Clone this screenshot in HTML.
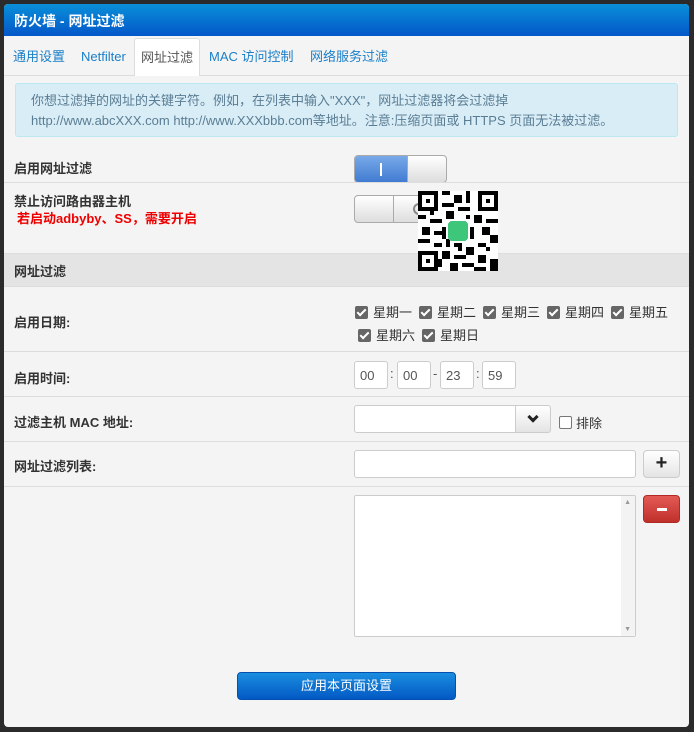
<!DOCTYPE html>
<html><head><meta charset="utf-8"><style>
*{box-sizing:border-box;margin:0;padding:0}
body{width:694px;height:732px;background:#2b2b2b;font-family:"Liberation Sans","Noto Sans CJK SC",sans-serif;font-size:13px;color:#333;position:relative;overflow:hidden}
.panel{position:absolute;left:4px;top:4px;width:685px;height:723px;background:#f4f4f4;border-radius:4px;overflow:hidden}
.hd{height:32px;background:linear-gradient(#0a8fd8,#0357c9);color:#fff;font-weight:bold;font-size:14px;padding:7px 10px}
.tabs{position:absolute;top:34px;left:0;right:0;height:38px;border-bottom:1px solid #ddd}
.tab{position:absolute;top:0;height:38px;line-height:37px;color:#1a7fc7;font-size:13px}
.tab.act{background:#fff;border:1px solid #ddd;border-bottom:none;border-radius:3px 3px 0 0;color:#555;padding:0 6px}
.info{position:absolute;left:11px;top:79px;width:663px;height:54px;background:#d9edf7;border:1px solid #bce8f1;border-radius:3px;color:#5a7d94;font-size:13px;line-height:20px;padding:7px 15px}
.line{position:absolute;left:0;right:0;height:1px;background:#ddd}
.lbl{position:absolute;left:10px;font-weight:bold;font-size:13px;color:#333}
.sw{position:absolute;left:350px;width:93px;height:28px;border:1px solid #aaa;border-radius:4px;background:linear-gradient(#fff,#ddd);overflow:hidden}
.inp{position:absolute;background:#fff;border:1px solid #ccc;border-radius:3px}
.cb{display:inline-block;width:13px;height:13px;background:#666;border-radius:2px;vertical-align:-2px;margin-right:5px;position:relative}
.cb:after{content:"";position:absolute;left:4px;top:1px;width:3px;height:7px;border:solid #fff;border-width:0 2px 2px 0;transform:rotate(45deg)}
.days{position:absolute;font-size:13px;color:#333;white-space:nowrap}
.days i{font-style:normal;display:inline-block;width:64px}
.tm{position:absolute;top:357px;width:34px;height:28px;background:#fff;border:1px solid #ccc;border-radius:3px;padding:6px 5px;color:#555}
.sep{position:absolute;top:362px;color:#555}
.btn{position:absolute;border:1px solid #ccc;border-radius:4px;background:linear-gradient(#fff,#e4e4e4)}
</style></head><body>
<div class="panel">
<div class="hd">防火墙 - 网址过滤</div>
<div class="tabs">
<span class="tab" style="left:9px">通用设置</span>
<span class="tab" style="left:77px">Netfilter</span>
<span class="tab act" style="left:130px">网址过滤</span>
<span class="tab" style="left:205px">MAC 访问控制</span>
<span class="tab" style="left:306px">网络服务过滤</span>
</div>
<div class="info">你想过滤掉的网址的关键字符。例如，在列表中输入"XXX"，网址过滤器将会过滤掉<br>http://www.abcXXX.com http://www.XXXbbb.com等地址。注意:压缩页面或 HTTPS 页面无法被过滤。</div>

<div class="lbl" style="top:154px">启用网址过滤</div>
<div class="sw" style="top:151px"><div style="position:absolute;left:0;top:0;width:53px;height:28px;background:linear-gradient(#78a9e8,#3d78d0);border-right:1px solid #aaa"><div style="position:absolute;left:25px;top:7px;width:2px;height:13px;background:#fff"></div></div></div>
<div class="line" style="top:178px"></div>

<div class="lbl" style="top:187px">禁止访问路由器主机</div>
<div style="position:absolute;left:13px;top:204px;color:#e00;font-weight:bold;font-size:13px">若启动adbyby、SS，需要开启</div>
<div class="sw" style="top:191px;width:90px"><div style="position:absolute;left:38px;top:-1px;width:1px;height:28px;background:#aaa"></div><div style="position:absolute;left:58px;top:7px;width:12px;height:12px;border:2px solid #888;border-radius:50%"></div></div>

<div style="position:absolute;left:0;right:0;top:249px;height:34px;background:#e4e4e4;border-top:1px solid #ddd;border-bottom:1px solid #ddd"></div>
<div class="lbl" style="top:257px">网址过滤</div>

<svg style="position:absolute;left:414px;top:187px" width="80" height="80" viewBox="0 0 20 20" shape-rendering="crispEdges">
<rect width="20" height="20" fill="#fff"/>
<g fill="#000">
<rect x="0" y="0" width="5" height="5"/><rect x="15" y="0" width="5" height="5"/><rect x="0" y="15" width="5" height="5"/>
</g>
<g fill="#fff"><rect x="1" y="1" width="3" height="3"/><rect x="16" y="1" width="3" height="3"/><rect x="1" y="16" width="3" height="3"/></g>
<g fill="#000"><rect x="2" y="2" width="1" height="1"/><rect x="17" y="2" width="1" height="1"/><rect x="2" y="17" width="1" height="1"/>
<rect x="6" y="0" width="2" height="1"/><rect x="9" y="1" width="2" height="2"/><rect x="12" y="0" width="1" height="3"/><rect x="6" y="3" width="3" height="1"/><rect x="7" y="5" width="2" height="2"/><rect x="10" y="4" width="3" height="1"/><rect x="0" y="6" width="2" height="1"/><rect x="3" y="7" width="3" height="1"/><rect x="1" y="9" width="2" height="2"/><rect x="4" y="10" width="2" height="1"/><rect x="0" y="12" width="3" height="1"/><rect x="4" y="13" width="2" height="1"/><rect x="14" y="6" width="2" height="2"/><rect x="17" y="7" width="3" height="1"/><rect x="16" y="9" width="2" height="2"/><rect x="18" y="11" width="2" height="2"/><rect x="15" y="13" width="2" height="1"/><rect x="6" y="15" width="2" height="2"/><rect x="9" y="16" width="3" height="1"/><rect x="12" y="14" width="2" height="2"/><rect x="15" y="16" width="2" height="2"/><rect x="18" y="17" width="2" height="3"/><rect x="8" y="18" width="2" height="2"/><rect x="11" y="18" width="3" height="1"/><rect x="14" y="19" width="3" height="1"/><rect x="6" y="9" width="1" height="3"/><rect x="13" y="9" width="1" height="3"/><rect x="9" y="13" width="2" height="1"/><rect x="16" y="4" width="2" height="1"/>
<rect x="5" y="17" width="1" height="2"/><rect x="7" y="12" width="1" height="2"/><rect x="3" y="5" width="1" height="1"/><rect x="12" y="6" width="1" height="1"/><rect x="17" y="14" width="1" height="1"/><rect x="10" y="14" width="1" height="1"/></g>
<rect x="7.5" y="7.5" width="5" height="5" rx="1" fill="#3ec67a"/>
</svg>

<div class="lbl" style="top:308px">启用日期:</div>
<div class="days" style="left:351px;top:298px"><i><span class="cb"></span>星期一</i><i><span class="cb"></span>星期二</i><i><span class="cb"></span>星期三</i><i><span class="cb"></span>星期四</i><i><span class="cb"></span>星期五</i></div>
<div class="days" style="left:354px;top:321px"><i><span class="cb"></span>星期六</i><i><span class="cb"></span>星期日</i></div>
<div class="line" style="top:347px"></div>

<div class="lbl" style="top:364px">启用时间:</div>
<div class="tm" style="left:350px">00</div><span class="sep" style="left:386px">:</span>
<div class="tm" style="left:393px">00</div><span class="sep" style="left:429px">-</span>
<div class="tm" style="left:436px">23</div><span class="sep" style="left:472px">:</span>
<div class="tm" style="left:478px">59</div>
<div class="line" style="top:392px"></div>

<div class="lbl" style="top:408px">过滤主机 MAC 地址:</div>
<div class="inp" style="left:350px;top:401px;width:162px;height:28px;border-radius:3px 0 0 3px"></div>
<div class="btn" style="left:511px;top:401px;width:36px;height:28px;border-radius:0 3px 3px 0"><div style="position:absolute;left:13px;top:7px;width:8px;height:8px;border:solid #222;border-width:0 3px 3px 0;transform:rotate(45deg)"></div></div>
<div style="position:absolute;left:555px;top:412px;width:13px;height:13px;border:1px solid #777;border-radius:2px;background:#fff"></div>
<span style="position:absolute;left:572px;top:409px">排除</span>
<div class="line" style="top:437px"></div>

<div class="lbl" style="top:452px">网址过滤列表:</div>
<div class="inp" style="left:350px;top:446px;width:282px;height:28px"></div>
<div class="btn" style="left:639px;top:446px;width:37px;height:28px;text-align:center;font-weight:bold;font-size:20px;line-height:25px;color:#222">+</div>
<div class="line" style="top:482px"></div>

<div class="inp" style="left:350px;top:491px;width:282px;height:142px;border-radius:2px"><div style="position:absolute;right:0;top:0;width:14px;height:140px;background:#f3f3f3"></div><span style="position:absolute;right:4px;top:3px;font-size:7px;color:#999">▲</span><span style="position:absolute;right:4px;bottom:3px;font-size:7px;color:#999">▼</span></div>
<div style="position:absolute;left:639px;top:491px;width:37px;height:28px;border-radius:4px;background:linear-gradient(#e35a55,#c0302b);border:1px solid #b02a25"><div style="position:absolute;left:13px;top:12px;width:10px;height:3px;background:#fff"></div></div>

<div style="position:absolute;left:233px;top:668px;width:219px;height:28px;border-radius:4px;background:linear-gradient(#1a8ee0,#0359c4);border:1px solid #0350b0;color:#fff;text-align:center;line-height:26px;font-size:13px">应用本页面设置</div>
</div>
</body></html>
